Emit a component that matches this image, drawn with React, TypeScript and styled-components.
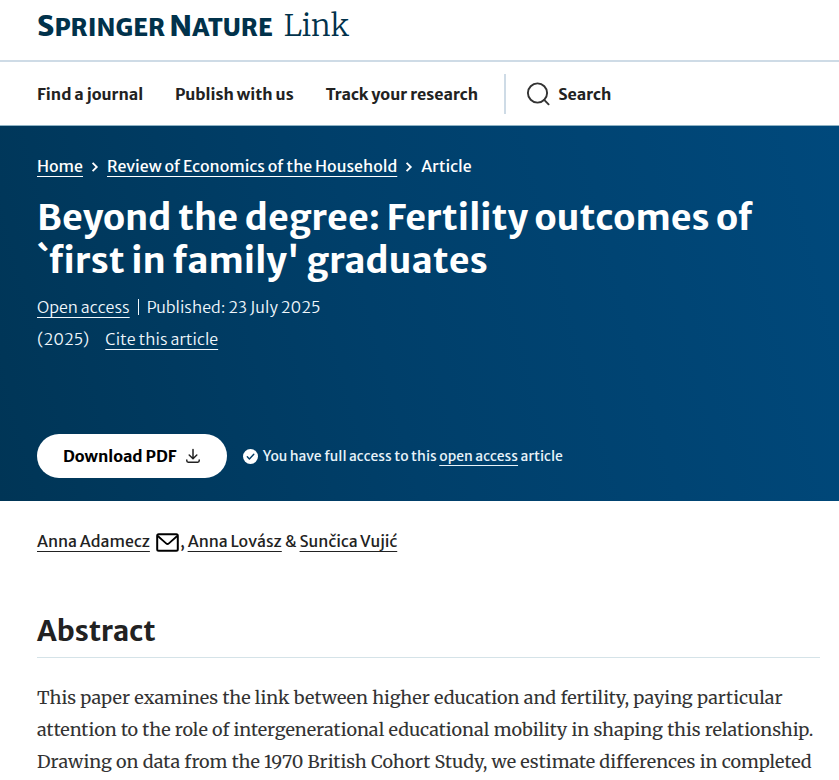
import React from "react";
import styled, { createGlobalStyle } from "styled-components";

const sans = '"Merriweather Sans", "Noto Sans", sans-serif';
const serif = 'Merriweather, "Noto Serif", "Liberation Serif", serif';

const GlobalStyle = createGlobalStyle`
  *, *::before, *::after { box-sizing: border-box; }
  body { margin: 0; background: #fff; color: #222; font: 400 16px/24px ${sans}; }
  h1, h2, p, ol, ul { margin: 0; padding: 0; }
  ol, ul { list-style: none; }
`;

const Page = styled.div`
  overflow-x: hidden;
`;

const Header = styled.header`
  height: 62px;
  padding: 5px 37px 0;
  border-bottom: 2px solid #cedbe6;
`;

const Logo = styled.a`
  display: inline-flex;
  align-items: baseline;
  color: #01324b;
  text-decoration: none;
  line-height: 40px;
`;

const Brand = styled.span`
  font-size: 24px;
  font-weight: 800;
  white-space: nowrap;
`;

const Initial = styled.span`
  font-size: 29px;
`;

const Product = styled.span`
  margin-left: 11px;
  font: 300 30px/40px ${serif};
`;

const Nav = styled.nav`
  display: flex;
  align-items: center;
  height: 64px;
  padding: 0 37px;
  border-bottom: 1px solid #8fb3c4;
`;

const NavList = styled.ul`
  display: flex;
  gap: 32px;
`;

const NavLink = styled.a`
  display: flex;
  align-items: center;
  color: #222;
  font-weight: 600;
  text-decoration: none;
  white-space: nowrap;
`;

const SearchArea = styled.div`
  display: flex;
  align-items: center;
  height: 40px;
  margin-left: 26px;
  padding-left: 20px;
  border-left: 2px solid #cedbe6;

  svg { margin-right: 8px; }
`;

const Hero = styled.section`
  min-height: 375px;
  padding: 28px 37px 23px;
  background: linear-gradient(75deg, #003556 0%, #003f6a 45%, #00497c 100%);
  color: #fff;
`;

const Crumbs = styled.ol`
  display: flex;
  align-items: center;
  font-weight: 500;
  line-height: 24px;

  li { display: flex; align-items: center; }
  svg { margin: 2px 8px 0; }
`;

const TextLink = styled.a`
  color: inherit;
  text-decoration: underline;
  text-decoration-thickness: 1px;
  text-underline-offset: 4px;
  text-decoration-skip-ink: none;
`;

const Title = styled.h1`
  margin: 18px 0 9px;
  font-size: 36px;
  font-weight: 700;
  line-height: 43px;
`;

const Meta = styled.ul`
  display: flex;
  color: #f0f7fc;
  font-weight: 300;
  line-height: 32px;
`;

const MetaItem = styled.li<{ $gap?: number; $divided?: boolean }>`
  display: flex;
  align-items: center;
  margin-left: ${(p) => p.$gap ?? 0}px;

  &::before {
    content: "";
    display: ${(p) => (p.$divided ? "block" : "none")};
    width: 1px;
    height: 16px;
    margin-right: 8px;
    background: currentColor;
  }
`;

const Actions = styled.div`
  display: flex;
  align-items: center;
  gap: 16px;
  margin-top: 79px;
`;

const DownloadButton = styled.button`
  display: flex;
  align-items: center;
  gap: 8px;
  height: 44px;
  padding: 0 26px;
  border: 0;
  border-radius: 22px;
  background: #fff;
  color: #000;
  font: 700 16px/24px ${sans};
  white-space: nowrap;
`;

const Access = styled.p`
  display: flex;
  align-items: center;
  gap: 5px;
  color: #e8f3fa;
  font-size: 14px;
`;

const Article = styled.main`
  padding: 28px 19px 0 37px;
`;

const Authors = styled.p`
  display: flex;
  flex-wrap: wrap;
  white-space: pre;
  color: #222;

  svg { margin: 4px 1px 0 6px; }
`;

const SectionTitle = styled.h2`
  margin-top: 58px;
  padding-bottom: 6px;
  border-bottom: 1px solid #d5e3e8;
  font-size: 28px;
  font-weight: 600;
  line-height: 40px;
`;

const Abstract = styled.p`
  margin-top: 24px;
  color: #333;
  font: 400 18px/32px ${serif};
`;

const Chevron = () => (
  <svg width="8" height="12" viewBox="0 0 8 12" fill="none" stroke="currentColor" strokeWidth="1.8" aria-hidden="true">
    <path d="M1.6 1.8 5.8 6 1.6 10.2" />
  </svg>
);

const SearchIcon = () => (
  <svg width="24" height="24" viewBox="0 0 24 24" fill="none" stroke="#333" strokeWidth="1.9" strokeLinecap="round" aria-hidden="true">
    <circle cx="11.5" cy="11" r="9.6" />
    <path d="m18.2 17.9 4.4 4.4" />
  </svg>
);

const DownloadIcon = () => (
  <svg width="16" height="16" viewBox="0 0 16 16" fill="none" stroke="#222" strokeWidth="1.5" strokeLinecap="round" strokeLinejoin="round" aria-hidden="true">
    <path d="M8 1.5v9M4.2 7 8 10.7 11.8 7M1.8 12v.8q0 1.4 1.4 1.4h9.6q1.4 0 1.4-1.4V12" />
  </svg>
);

const CheckIcon = () => (
  <svg width="15" height="15" viewBox="0 0 15 15" fill="none" aria-hidden="true">
    <circle cx="7.5" cy="7.5" r="7.5" fill="#fff" />
    <path d="m4.3 7.8 2.1 2.1 4.4-4.6" stroke="#003a62" strokeWidth="1.4" strokeLinecap="round" strokeLinejoin="round" />
  </svg>
);

const MailIcon = () => (
  <svg width="23" height="19" viewBox="0 0 23 19" fill="none" stroke="#000" strokeWidth="2" strokeLinejoin="round" aria-label="Email author">
    <rect x="1.2" y="1.2" width="20.6" height="16.6" rx="1.5" />
    <path d="m1.8 3 8.3 7.4q1.4 1.2 2.8 0L21.2 3" strokeWidth="1.8" />
  </svg>
);

export default function App() {
  return (
    <Page>
      <GlobalStyle />
      <Header>
        <Logo href="#" aria-label="Springer Nature Link">
          <Brand>
            <Initial>S</Initial>PRINGER
          </Brand>
          <Brand>
            &nbsp;<Initial>N</Initial>ATURE
          </Brand>
          <Product>Link</Product>
        </Logo>
      </Header>
      <Nav>
        <NavList>
          <li><NavLink href="#journals">Find a journal</NavLink></li>
          <li><NavLink href="#publish">Publish with us</NavLink></li>
          <li><NavLink href="#track">Track your research</NavLink></li>
        </NavList>
        <SearchArea>
          <NavLink href="#search"><SearchIcon />Search</NavLink>
        </SearchArea>
      </Nav>
      <Hero>
        <Crumbs>
          <li><TextLink href="#home">Home</TextLink><Chevron /></li>
          <li><TextLink href="#journal">Review of Economics of the Household</TextLink><Chevron /></li>
          <li>Article</li>
        </Crumbs>
        <Title>Beyond the degree: Fertility outcomes of `first in family' graduates</Title>
        <Meta>
          <MetaItem><TextLink href="#oa">Open access</TextLink></MetaItem>
          <MetaItem $gap={8} $divided>Published: 23 July 2025</MetaItem>
        </Meta>
        <Meta>
          <MetaItem>(2025)</MetaItem>
          <MetaItem $gap={16}><TextLink href="#cite">Cite this article</TextLink></MetaItem>
        </Meta>
        <Actions>
          <DownloadButton type="button">Download PDF <DownloadIcon /></DownloadButton>
          <Access>
            <CheckIcon />
            <span>You have full access to this <TextLink href="#oa">open access</TextLink> article</span>
          </Access>
        </Actions>
      </Hero>
      <Article>
        <Authors>
          <TextLink href="#adamecz">Anna Adamecz</TextLink><MailIcon />{", "}
          <TextLink href="#lovasz">Anna Lovász</TextLink>{" & "}
          <TextLink href="#vujic">Sunčica Vujić</TextLink>
        </Authors>
        <SectionTitle>Abstract</SectionTitle>
        <Abstract>
          This paper examines the link between higher education and fertility, paying particular
          attention to the role of intergenerational educational mobility in shaping this relationship.
          Drawing on data from the 1970 British Cohort Study, we estimate differences in completed
        </Abstract>
      </Article>
    </Page>
  );
}
